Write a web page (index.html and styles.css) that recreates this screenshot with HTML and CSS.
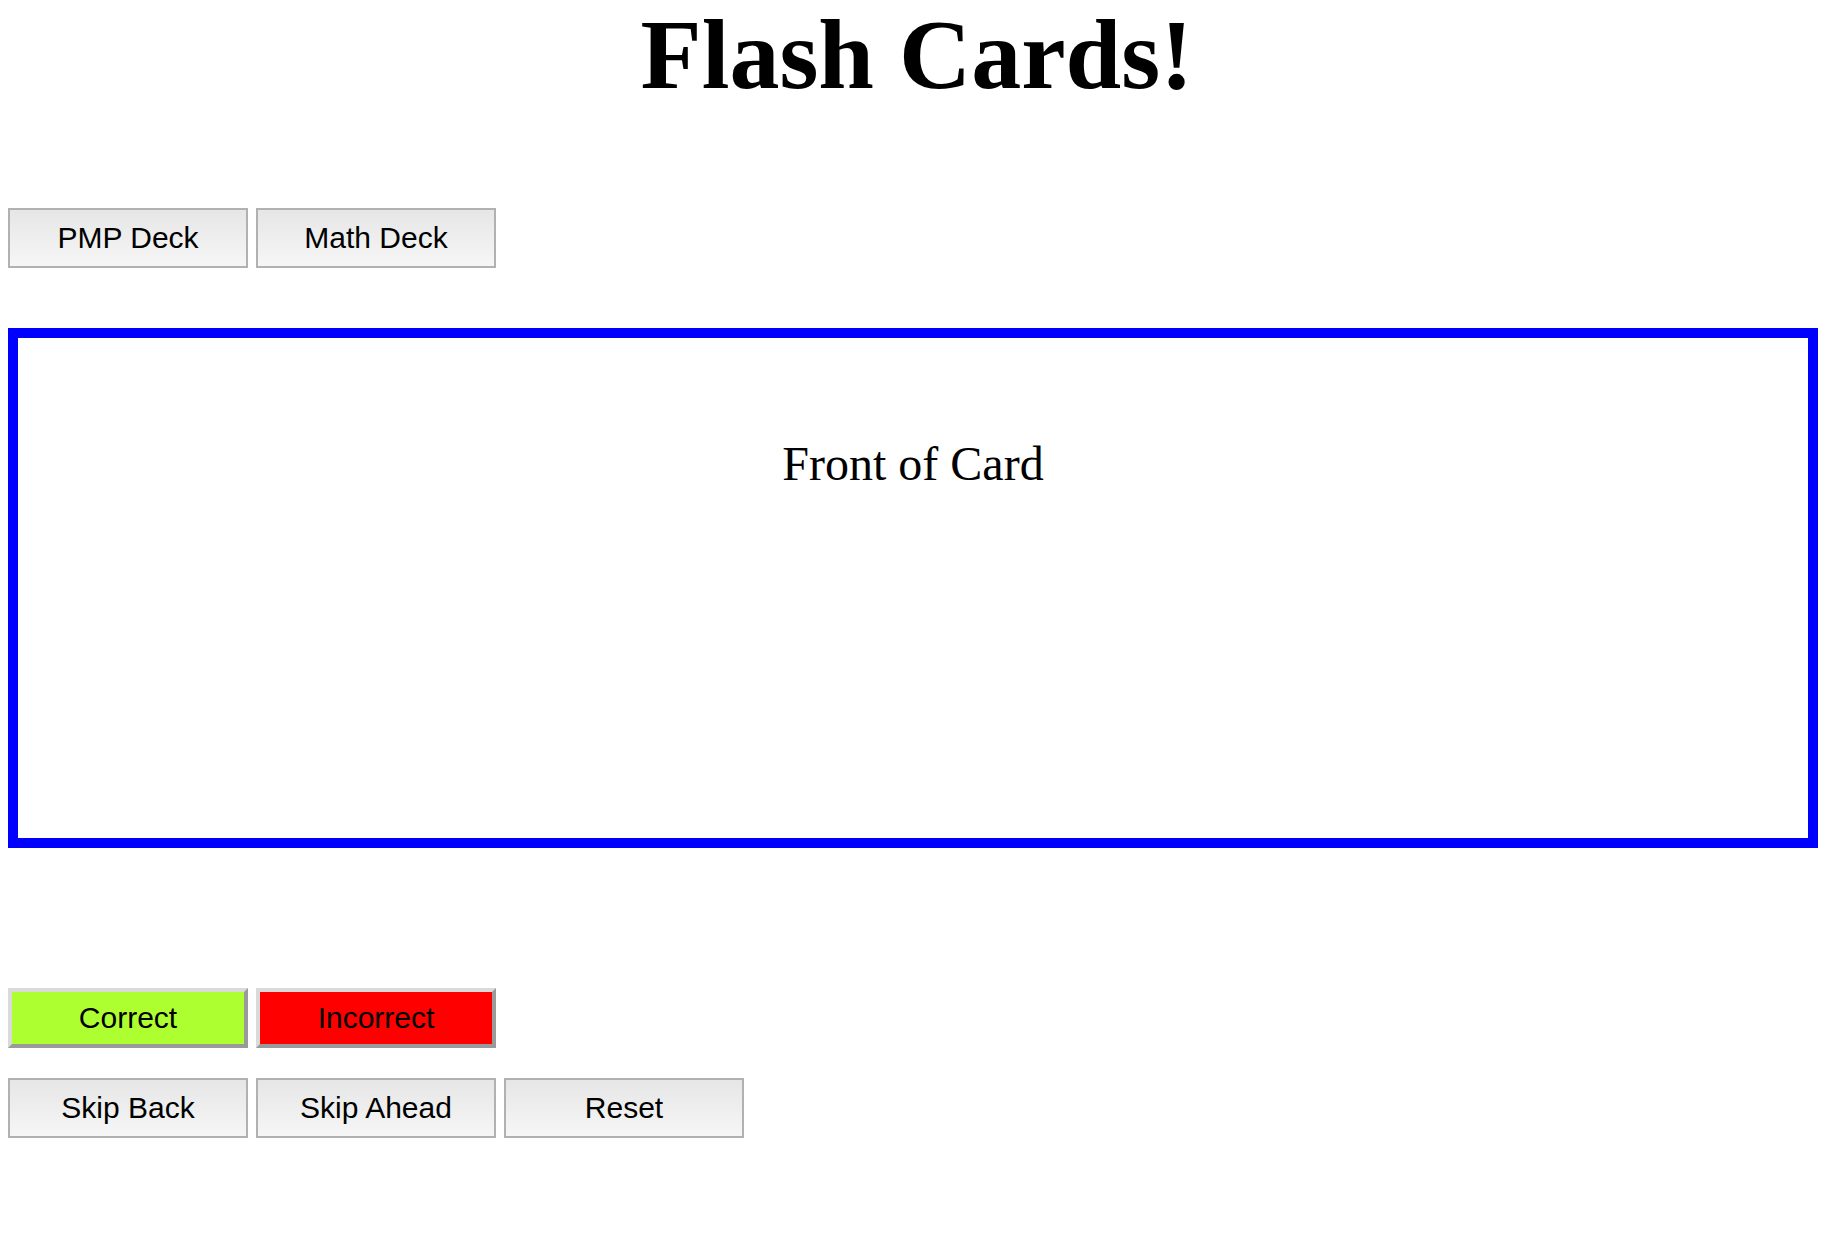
FILE: index.html
```html
<!DOCTYPE html>
<html>
<head>
<meta charset="utf-8">
<title>Flash Cards!</title>
<link rel="stylesheet" href="styles.css">
</head>
<body>
<h1 class="title">Flash Cards!</h1>
<div class="row deck-row">
  <button class="btn">PMP Deck</button>
  <button class="btn">Math Deck</button>
</div>
<div class="card">
  <p class="card-text">Front of Card</p>
</div>
<div class="row answer-row">
  <button class="btn btn-correct">Correct</button>
  <button class="btn btn-incorrect">Incorrect</button>
</div>
<div class="row nav-row">
  <button class="btn">Skip Back</button>
  <button class="btn">Skip Ahead</button>
  <button class="btn">Reset</button>
</div>
</body>
</html>
```

FILE: styles.css
```css
html, body {
  background: #ffffff;
}
body {
  margin: 0 8px 8px;
  font-family: "Liberation Serif", "Times New Roman", serif;
  color: #000;
}
.title {
  margin: 0;
  font-family: "Liberation Serif", "Times New Roman", serif;
  font-weight: bold;
  font-size: 100px;
  line-height: 110px;
  text-align: center;
}
.row {
  display: flex;
  gap: 8px;
}
.deck-row {
  margin-top: 98px;
}
.btn {
  box-sizing: border-box;
  width: 240px;
  height: 60px;
  margin: 0;
  padding: 0;
  font-family: "Liberation Sans", Arial, sans-serif;
  font-size: 30px;
  color: #000;
  background: linear-gradient(#e6e6e6, #f6f6f6);
  border: 2px solid #b1b1b1;
  border-radius: 0;
}
.card {
  box-sizing: border-box;
  width: 1810px;
  height: 520px;
  margin-top: 60px;
  border: 10px solid #0000ff;
  text-align: center;
}
.card-text {
  margin: 98px 0 0;
  font-size: 48px;
  line-height: 55px;
}
.answer-row {
  margin-top: 140px;
}
.btn-correct,
.btn-incorrect {
  border-width: 4px;
  border-style: solid;
  border-color: #dadada #9a9a9a #9a9a9a #dadada;
}
.btn-correct {
  background: #adff2f;
}
.btn-incorrect {
  background: #ff0000;
}
.nav-row {
  margin-top: 30px;
}
```
